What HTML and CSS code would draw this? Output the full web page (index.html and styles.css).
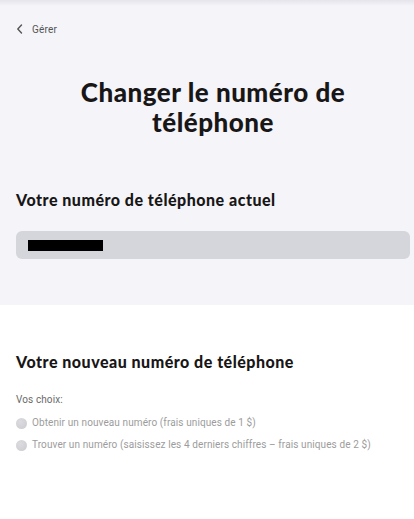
FILE: index.html
```html
<!DOCTYPE html>
<html lang="fr">
<head>
<meta charset="utf-8">
<title>Changer le numéro de téléphone</title>
<link rel="stylesheet" href="styles.css">
</head>
<body>
<div class="top">
  <a class="back" href="#">
    <svg class="chev" width="8" height="10" viewBox="0 0 8 10"><path d="M5.5 1 L1.8 5 L5.5 9" fill="none" stroke="#555" stroke-width="1.4" stroke-linecap="round" stroke-linejoin="round"/></svg>
    <span>Gérer</span>
  </a>
  <h1 class="title">Changer le numéro de téléphone</h1>
  <h2 class="sub">Votre numéro de téléphone actuel</h2>
  <div class="field"><span class="redact"></span></div>
</div>
<div class="bottom">
  <h2 class="sub">Votre nouveau numéro de téléphone</h2>
  <p class="label">Vos choix:</p>
  <label class="opt"><span class="radio"></span>Obtenir un nouveau numéro (frais uniques de 1 $)</label>
  <label class="opt"><span class="radio"></span>Trouver un numéro (saisissez les 4 derniers chiffres – frais uniques de 2 $)</label>
</div>
</body>
</html>
```
FILE: styles.css
```css
html, body { margin: 0; padding: 0; background: #fff; }
body { font-family: Roboto, "Liberation Sans", sans-serif; color: #222; }
.top {
  background: #f4f4f9;
  padding: 20px 4px 46px 16px;
  background-image: linear-gradient(#e4e4ea, #f4f4f9 6px);
}
.back {
  display: flex; align-items: center; gap: 8px;
  text-decoration: none; color: #555; font-size: 10px; height: 18px;
  letter-spacing: 0.2px;
}
.chev { display: block; }
.title {
  margin: 39px 0 0 0;
  text-align: center;
  font-family: Lato, "Open Sans", sans-serif;
  font-weight: 900; font-size: 26px; line-height: 30px;
  color: #181616; letter-spacing: 0.5px;
  padding: 0 50px;
}
.sub {
  margin: 0;
  font-family: Lato, "Open Sans", sans-serif;
  font-weight: 900; font-size: 16px; line-height: 22px; color: #181616;
  letter-spacing: 0.5px;
}
.top .sub { margin-top: 52px; }
.field {
  margin-top: 20px;
  height: 28px; background: #d5d6db; border-radius: 6px;
  display: flex; align-items: center; padding-left: 12px;
}
.redact { width: 75px; height: 11px; background: #000; display: block; }
.bottom { padding: 46px 16px 20px 16px; }
.label { margin: 21px 0 0 0; font-size: 10px; color: #6a6a6a; line-height: 12px; letter-spacing: 0.1px; }
.opt {
  display: flex; align-items: center; gap: 5px;
  margin-top: 10px; font-size: 10px; color: #9c9c9c; line-height: 12px;
  letter-spacing: 0.1px;
}
.label + .opt { margin-top: 11px; }
.radio {
  width: 11px; height: 11px; border-radius: 50%;
  background: radial-gradient(circle at 40% 35%, #dcdce0, #cbcbcf);
  display: block; flex: none;
}
```
